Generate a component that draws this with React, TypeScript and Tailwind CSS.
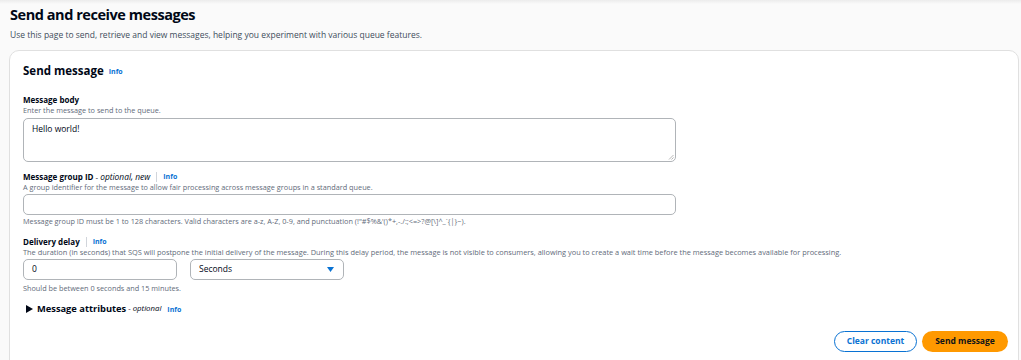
import React from "react";

const Info = () => (
  <span className="text-[7px] font-bold text-[#0972d3] leading-none">Info</span>
);

const Sep = () => <span className="mx-[6px] inline-block h-[10px] w-px bg-[#d1d5db]" />;

export default function App() {
  return (
    <div className="h-[360px] w-[1021px] overflow-hidden bg-[#fafafa] font-['Open_Sans','Noto_Sans',sans-serif] text-[#000716]">
      <div className="h-[4px] w-full bg-gradient-to-b from-[#ececec] to-[#fafafa]" />
      <div className="pl-[10px] pt-[1px]">
        <h1 className="text-[14.5px] font-bold leading-[20px] tracking-[-0.45px]">Send and receive messages</h1>
        <p className="mt-[4px] text-[8.5px] leading-[12px] text-[#414d5c]">
          Use this page to send, retrieve and view messages, helping you experiment with various queue features.
        </p>
      </div>
      <div className="ml-[9px] mr-[2px] mt-[9px] h-[320px] rounded-[10px] border border-[#e0e0e0] bg-white pl-[13px] pr-[10px] pt-[11px]">
        <div className="flex items-center gap-[5px]">
          <h2 className="text-[11.5px] font-bold leading-[18px]">Send message</h2>
          <Info />
        </div>

        <div className="mt-[14px]">
          <div className="text-[8px] font-bold leading-[11px]">Message body</div>
          <div className="text-[7.3px] leading-[11px] text-[#5f6b7a]">Enter the message to send to the queue.</div>
          <div className="relative mt-[2px] h-[44px] w-[653px] rounded-[5px] border border-[#b0b4b8] px-[8px] pt-[3px] text-[8.5px] leading-[13px]">
            Hello world!
            <svg className="absolute bottom-[1px] right-[1px]" width="6" height="6" viewBox="0 0 6 6">
              <path d="M5.5 1 L1 5.5 M5.5 3.5 L3.5 5.5" stroke="#999" strokeWidth="0.7" />
            </svg>
          </div>
        </div>

        <div className="mt-[9px]">
          <div className="flex items-center text-[8px] leading-[11px]">
            <span className="font-bold">Message group ID</span>
            <span>&nbsp;-&nbsp;</span>
            <span className="text-[8.4px] italic">optional, new</span>
            <Sep />
            <Info />
          </div>
          <div className="text-[7.3px] leading-[11px] text-[#5f6b7a]">
            A group identifier for the message to allow fair processing across message groups in a standard queue.
          </div>
          <div className="mt-[1px] h-[21px] w-[653px] rounded-[5px] border border-[#b0b4b8]" />
          <div className="text-[7.3px] leading-[12px] text-[#5f6b7a]">
            Message group ID must be 1 to 128 characters. Valid characters are a-z, A-Z, 0-9, and punctuation (!"#$%&amp;'()*+,-./:;&lt;=&gt;?@[\]^_`{"{|}"}~).
          </div>
        </div>

        <div className="mt-[9px]">
          <div className="flex items-center text-[8px] leading-[11px]">
            <span className="font-bold">Delivery delay</span>
            <Sep />
            <Info />
          </div>
          <div className="text-[7.4px] leading-[11px] text-[#5f6b7a]">
            The duration (in seconds) that SQS will postpone the initial delivery of the message. During this delay period, the message is not visible to consumers, allowing you to create a wait time before the message becomes available for processing.
          </div>
          <div className="mt-[1px] flex gap-[13px]">
            <div className="flex h-[21px] w-[154px] items-center rounded-[5px] border border-[#b0b4b8] px-[8px] text-[8.5px]">0</div>
            <div className="flex h-[21px] w-[154px] items-center justify-between rounded-[5px] border border-[#b0b4b8] pl-[8px] pr-[9px] text-[8.5px]">
              <span>Seconds</span>
              <svg width="7" height="5" viewBox="0 0 7 5">
                <path d="M0 0 H7 L3.5 5 Z" fill="#0972d3" />
              </svg>
            </div>
          </div>
          <div className="mt-[2px] text-[7.3px] leading-[12px] text-[#5f6b7a]">Should be between 0 seconds and 15 minutes.</div>
        </div>

        <div className="ml-[3px] mt-[8px] flex items-center">
          <svg width="7" height="8" viewBox="0 0 7 8">
            <path d="M0 0 L7 4 L0 8 Z" fill="#000716" />
          </svg>
          <span className="ml-[4px] text-[9.3px] font-bold leading-[14px]">Message attributes</span>
          <span className="text-[7.8px] italic">&nbsp;- optional</span>
          <span className="ml-[6px] flex items-center"><Info /></span>
        </div>

        <div className="mt-[15px] flex justify-end gap-[5px]">
          <button className="h-[21px] w-[83px] rounded-full border-[1.5px] border-[#0972d3] bg-white text-[8.5px] font-bold text-[#0972d3]">
            Clear content
          </button>
          <button className="h-[21px] w-[86px] rounded-full bg-[#ff9900] text-[8.5px] font-bold text-[#0f141a]">
            Send message
          </button>
        </div>
      </div>
    </div>
  );
}
